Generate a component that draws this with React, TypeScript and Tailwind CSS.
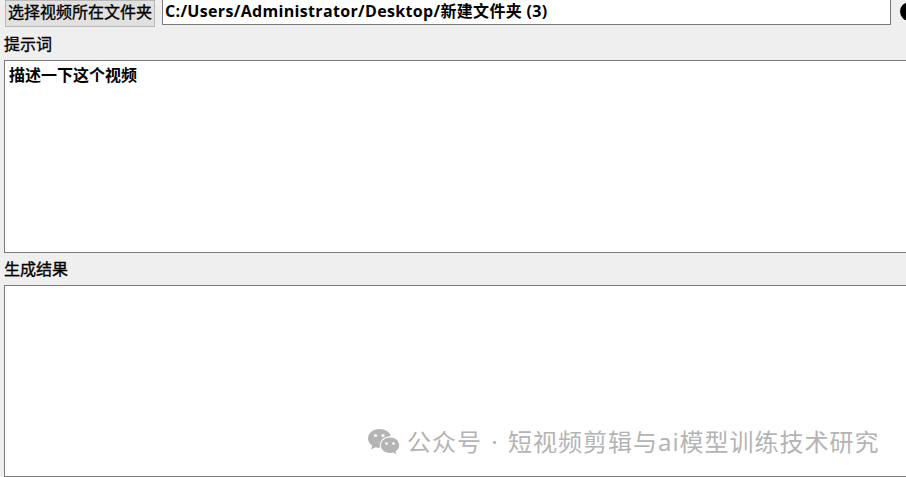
const cjk = '"Liberation Sans", "Noto Sans CJK SC", sans-serif'
const pathFont = '"Open Sans", "Noto Sans CJK SC", sans-serif'
const markFont = '"Noto Sans", "Noto Sans CJK SC", sans-serif'

function WechatIcon() {
  return (
    <svg width="33" height="27" viewBox="0 0 33 27" className="shrink-0">
      <path d="M12.5 1C5.9 1 1 5.2 1 10.5c0 3 1.6 5.500 4.200 7.300L4.200 21.400l4.200-2.200c1.300.4 2.700.6 4.100.6h.7a9 9 0 0 1-.4-2.600c0-5 4.600-8.900 10.200-8.900h.8C22.700 4 18 1 12.500 1z" fill="#b4b4b4" />
      <circle cx="8.500" cy="7.500" r="1.600" fill="#fff" />
      <circle cx="16" cy="7.500" r="1.600" fill="#fff" />
      <path d="M23 9.500c-5.200 0-9.200 3.400-9.200 7.700s4 7.700 9.200 7.700c1.100 0 2.100-.2 3.100-.4l3.200 1.700-.8-2.900c2.300-1.400 3.700-3.600 3.700-6.100 0-4.300-4-7.700-9.200-7.700z" fill="#b4b4b4" />
      <circle cx="19.500" cy="15.500" r="1.300" fill="#fff" />
      <circle cx="26.500" cy="15.500" r="1.300" fill="#fff" />
    </svg>
  )
}

export default function App() {
  return (
    <div
      className="relative w-[906px] h-[477px] overflow-hidden bg-[#efefef] text-black"
      style={{ fontFamily: cjk }}
    >
      {/* 顶部：选择文件夹 */}
      <div className="flex items-start h-[34px] pl-[5px]">
        <button className="w-[150px] h-[27px] shrink-0 border border-[#b8b8b8] bg-[#e1e1e1] text-[16px] leading-[21px] pb-[3px] [-webkit-text-stroke:0.35px_black] whitespace-nowrap">
          选择视频所在文件夹
        </button>
        <div
          className="ml-[7px] w-[729px] h-[25px] shrink-0 border border-[#7a7a7a] border-t-0 bg-white pl-[2px] text-[16px] leading-[23px] font-bold tracking-[0.33px] whitespace-nowrap"
          style={{ fontFamily: pathFont }}
        >
          C:/Users/Administrator/Desktop/新建文件夹 (3)
        </div>
        <div className="ml-[9px] mt-[2px] w-[19px] h-[19px] shrink-0 rounded-full bg-black" />
      </div>

      {/* 提示词 */}
      <div className="pl-[4px] h-[26px] text-[16px] leading-[22px] [-webkit-text-stroke:0.35px_black]">提示词</div>
      <div className="ml-[4px] w-[910px] h-[193px] border border-[#7a7a7a] bg-white pl-[4px] pt-[4px] text-[16px] leading-[22px] font-bold">
        描述一下这个视频
      </div>

      {/* 生成结果 */}
      <div className="pl-[4px] h-[32px] pt-[6px] text-[16px] leading-[22px] [-webkit-text-stroke:0.35px_black]">生成结果</div>
      <div className="ml-[4px] w-[910px] h-[192px] border border-[#7a7a7a] bg-white" />

      {/* 水印 */}
      <div
        className="absolute left-[367px] top-[428px] flex items-center text-[#b4b4b4] text-[24px] leading-[27px] tracking-[1px] [word-spacing:2px] whitespace-nowrap"
        style={{ fontFamily: markFont }}
      >
        <WechatIcon />
        <span className="ml-[7px]">公众号 · 短视频剪辑与ai模型训练技术研究</span>
      </div>
    </div>
  )
}
